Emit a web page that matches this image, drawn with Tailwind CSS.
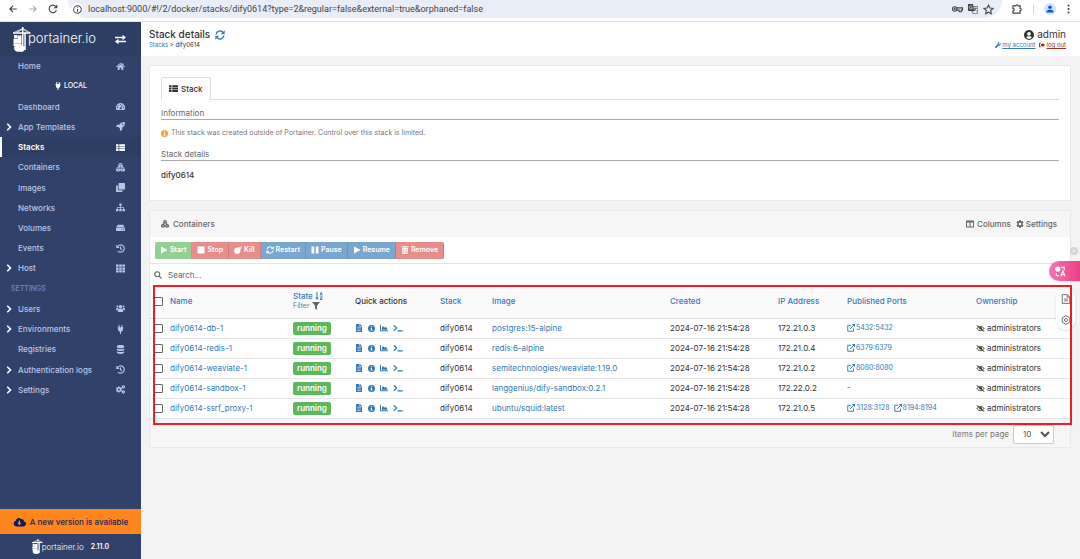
<!DOCTYPE html>
<html lang="en">
<head>
<meta charset="utf-8">
<title>Portainer - Stack details</title>
<script src="https://cdn.jsdelivr.net/npm/@tailwindcss/browser@4"></script>
</head>
<body class="flex h-screen flex-col overflow-hidden bg-[#f3f3f3] font-['Inter',sans-serif] text-[8px] leading-[10px] text-[#333]">

<svg class="hidden" aria-hidden="true">
  <symbol id="home" viewBox="0 0 16 16"><path d="M8 4.200l5 4.300V14H9.600v-3.600H6.400V14H3V8.500zM8 1.300l3.200 2.700V2.200h2v3.500L16 8l-1 1.200L8 3.300 1 9.200 0 8z"/></symbol>
  <symbol id="swap" viewBox="0 0 16 16"><path d="M0 4h11V1L16 5l-5 4V6.200H0zM16 9.800H5V7L0 11l5 4v-3h11z"/></symbol>
  <symbol id="plug" viewBox="0 0 16 16"><path d="M4.500 0h2v4h3V0h2v4H13v2h-.7v2A4.300 4.300 0 0 1 9 12.200V16H7v-3.800A4.300 4.300 0 0 1 3.700 8V6H3V4h1.500z"/></symbol>
  <symbol id="dash" viewBox="0 0 16 16"><path fill-rule="evenodd" d="M8 2a8 8 0 0 1 7 12H1A8 8 0 0 1 8 2zM8 3.500a1 1 0 1 0 0 2 1 1 0 0 0 0-2zM3.800 5.500a1 1 0 1 0 0 2 1 1 0 0 0 0-2zM2.500 9a1 1 0 1 0 0 2 1 1 0 0 0 0-2zM13.500 9a1 1 0 1 0 0 2 1 1 0 0 0 0-2zM11 5L8.300 9.600A1.700 1.700 0 1 0 9.500 10.300L12.200 5.600z"/></symbol>
  <symbol id="rocket" viewBox="0 0 16 16"><path fill-rule="evenodd" d="M15.700.3c.8 4.500-.8 7.200-4.700 9.900V14l-4 2v-4.300L4.300 9H0l2-4h3.800C8.500 1 11.500-.4 15.700.3zM12 2.700a1.300 1.300 0 1 0 0 2.600 1.300 1.300 0 0 0 0-2.600z"/></symbol>
  <symbol id="list" viewBox="0 0 16 16"><path d="M0 2h4.500v3.400H0zM5.800 2H16v3.400H5.800zM0 6.400h4.500v3.400H0zM5.800 6.400H16v3.400H5.800zM0 10.800h4.500v3.400H0zM5.800 10.800H16v3.400H5.800z"/></symbol>
  <symbol id="cubes" viewBox="0 0 16 16"><path d="M8 0l3.900 1.500-3.900 1.800-3.900-1.800zM4 2.300l3.700 1.700v4L4 6.500zM12 2.300L8.300 4v4L12 6.500zM4 7.200l3.800 1.600L4 10.400.2 8.800zM0 9.600l3.700 1.600v4.400L0 13.800zM7.800 9.600l-3.500 1.600v4.400l3.500-1.800zM12 7.200l3.800 1.600-3.800 1.600-3.800-1.600zM8.200 9.600l3.500 1.600v4.400l-3.500-1.800zM16 9.600l-3.700 1.600v4.400l3.700-1.800z"/></symbol>
  <symbol id="clone" viewBox="0 0 16 16"><path d="M5.500 0H15a1 1 0 0 1 1 1v9.500a1 1 0 0 1-1 1H5.500a1 1 0 0 1-1-1V1a1 1 0 0 1 1-1zM1 4.500h2.300v7.200c0 .6.400 1 1 1h7.200V15a1 1 0 0 1-1 1H1a1 1 0 0 1-1-1V5.500a1 1 0 0 1 1-1z"/></symbol>
  <symbol id="sitemap" viewBox="0 0 16 16"><path d="M5.800 1h4.400v4H8.700v2H14v3.500h2v4h-4.500v-4h1.200V8.300h-4v2.200h1.500v4H5.800v-4h1.500V8.300h-4v2.200h1.200v4H0v-4h2V7h5.300V5H5.800z"/></symbol>
  <symbol id="hdd" viewBox="0 0 16 16"><path fill-rule="evenodd" d="M3.500 3h9L16 8.200H0zM1 9h14a1 1 0 0 1 1 1v3a1 1 0 0 1-1 1H1a1 1 0 0 1-1-1v-3a1 1 0 0 1 1-1zM10 10.700v1.500h1.500v-1.500zM12.700 10.700v1.500h1.500v-1.500z"/></symbol>
  <symbol id="history" viewBox="0 0 16 16"><path fill="none" stroke="currentColor" stroke-width="2" d="M2.500 5A6.500 6.500 0 1 1 3.500 12.500M8 4.500V8.500l2.800 1.800"/><path d="M.5 1v6h6z"/></symbol>
  <symbol id="th" viewBox="0 0 16 16"><path d="M0 1h4.600v4H0zM5.700 1h4.600v4H5.700zM11.400 1H16v4h-4.600zM0 6h4.600v4H0zM5.700 6h4.600v4H5.700zM11.400 6H16v4h-4.600zM0 11h4.600v4H0zM5.700 11h4.600v4H5.700zM11.400 11H16v4h-4.600z"/></symbol>
  <symbol id="users" viewBox="0 0 16 16"><circle cx="2.700" cy="4.500" r="1.900"/><circle cx="13.300" cy="4.500" r="1.900"/><circle cx="8" cy="4.800" r="2.900"/><path d="M0 10C0 7.500 1 7 2.700 7c.8 0 1.500.3 2 .8C3.500 8.500 3 9.200 2.900 11H0zM16 10C16 7.500 15 7 13.300 7c-.8 0-1.500.3-2 .8 1.200.7 1.700 1.400 1.800 3.200H16zM3.500 14v-2.500c0-2 1.500-3.300 4.500-3.300s4.500 1.300 4.500 3.300V14z"/></symbol>
  <symbol id="db" viewBox="0 0 16 16"><path d="M1.500 2.500C1.500-.7 14.500-.7 14.500 2.500v1c0 3-13 3-13 0zM1.500 6c3 2 10 2 13 0v2.500c0 3-13 3-13 0zM1.500 11c3 2 10 2 13 0v2.500c0 3.200-13 3.200-13 0z"/></symbol>
  <symbol id="cog" viewBox="0 0 16 16"><path fill-rule="evenodd" d="M6.500 0h3l.4 2.100 1.500.8 2-.8 1.600 2.700L13.400 6.300v3.400l1.600 1.500-1.600 2.700-2-.8-1.500.8L9.500 16h-3l-.4-2.100-1.500-.8-2 .8L1 11.200l1.600-1.500V6.300L1 4.800l1.600-2.700 2 .8 1.500-.8zM8 5.300a2.700 2.700 0 1 0 0 5.400 2.700 2.700 0 0 0 0-5.400z"/></symbol>
  <symbol id="cogs" viewBox="0 0 16 16"><path fill-rule="evenodd" d="M4 2.500h2.400l.4 1.500 1.300.6 1.400-.6 1.200 2-1.100 1v2l1.100 1-1.200 2-1.400-.6-1.300.6-.4 1.500H4L3.600 12l-1.300-.6-1.300.6-1-2 1-1V7L0 6l1-2 1.300.6L3.600 4zM5.200 6.200a1.800 1.800 0 1 0 0 3.600 1.800 1.800 0 0 0 0-3.600zM12 .5h2l.3 1 1.700.8V5l-1.700.6-.3 1.200h-2l-.5-1.200L10.300 5V2.300l1.200-.8zM13 2.700a1 1 0 1 0 0 2 1 1 0 0 0 0-2zM12 9.200h2l.3 1 1.700.8v2.700l-1.700.6-.3 1.200h-2l-.5-1.200-1.200-.6V11l1.200-.8zM13 11.400a1 1 0 1 0 0 2 1 1 0 0 0 0-2z"/></symbol>
  <symbol id="sync" viewBox="0 0 16 16"><path fill="none" stroke="currentColor" stroke-width="2.200" d="M1.600 7A6.400 6.400 0 0 1 13 4.200M14.400 9A6.400 6.400 0 0 1 3 11.800"/><path d="M15.500.5v6.200H9.300zM.5 15.500V9.300h6.200z"/></symbol>
  <symbol id="cloud" viewBox="0 0 20 16"><path fill-rule="evenodd" d="M16.800 7A3 3 0 0 0 12.800 3.400 5 5 0 0 0 4 6a4.600 4.600 0 0 0 .6 9H16a4 4 0 0 0 .8-8zM8.700 5.500h2.200v3.700h2.500L9.800 13 6.200 9.200h2.500z"/></symbol>
  <symbol id="info" viewBox="0 0 16 16"><path fill-rule="evenodd" d="M8 0a8 8 0 1 0 0 16A8 8 0 0 0 8 0zM6.700 2.800h2.600v2.500H6.700zM6 6.600h3.300V11h1v1.700H5.800V11h.9V8.300H6z"/></symbol>
  <symbol id="play" viewBox="0 0 16 16"><path d="M2 1l13 7-13 7z"/></symbol>
  <symbol id="stop" viewBox="0 0 16 16"><rect x="1" y="1" width="14" height="14" rx="1"/></symbol>
  <symbol id="bomb" viewBox="0 0 16 16"><circle cx="6.500" cy="9.500" r="6.300"/><path d="M9 3l1.500-1.500 1.500 1.500 1.500-1.600 1 1L13 4l1.500 1.500L13 7zM14 0h1v1.500h-1zM15 2.500h1v1h-1z"/></symbol>
  <symbol id="pause" viewBox="0 0 16 16"><path d="M1 1h5.500v14H1zM9.500 1H15v14H9.500z"/></symbol>
  <symbol id="trash" viewBox="0 0 16 16"><path fill-rule="evenodd" d="M1 1h4.500l.7-1h3.600l.7 1H15v2H1zM2 4h12l-.7 12H2.700zM5 6v8h1V6zM7.500 6v8h1V6zM10 6v8h1V6z"/></symbol>
  <symbol id="search" viewBox="0 0 16 16"><path fill="none" stroke="currentColor" stroke-width="2.200" d="M6.500 1.500a5 5 0 1 1 0 10 5 5 0 0 1 0-10zM10.300 10.300L15 15"/></symbol>
  <symbol id="columns" viewBox="0 0 16 16"><path fill-rule="evenodd" d="M1 1h14a1 1 0 0 1 1 1v12a1 1 0 0 1-1 1H1a1 1 0 0 1-1-1V2a1 1 0 0 1 1-1zM2 5v8h5V5zM9 5v8h5V5z"/></symbol>
  <symbol id="sort" viewBox="0 0 16 16"><path d="M3 0h2v11h2.500L4 16 .5 11H3zM9.500 7L11.500 0h1.800l2 7h-1.600l-.4-1.500h-1.800L11.100 7zM12 4h1l-.5-2zM9.800 9H15v1.500L12 14.500h3V16H9.600v-1.500l3-4H9.800z"/></symbol>
  <symbol id="filter" viewBox="0 0 16 16"><path d="M0 0h16L10 7.500V16l-4-3V7.500z"/></symbol>
  <symbol id="file" viewBox="0 0 16 16"><path fill-rule="evenodd" d="M2 0h7v5h5v11H2zM10 0l4 4h-4zM4.500 7v1.200h7V7zM4.500 9.500v1.200h7V9.500zM4.500 12v1.200h7V12z"/></symbol>
  <symbol id="chart" viewBox="0 0 16 16"><path d="M0 2h2v10.500h14v2H0zM3.500 11.500V8L6 4l3 3.500 2.500-2.200 3 3.700v2.500z"/></symbol>
  <symbol id="term" viewBox="0 0 20 16"><path fill="none" stroke="currentColor" stroke-width="2.400" d="M1.500 2.500L7.500 8l-6 5.500M9 13.800h10.500"/></symbol>
  <symbol id="ext" viewBox="0 0 16 16"><path fill="none" stroke="currentColor" stroke-width="1.900" d="M8.500 2.500H1.500v12h11.500V9M6 10l7.500-7.500"/><path d="M9.500 0H16v6.500z"/></symbol>
  <symbol id="eyeoff" viewBox="0 0 20 16"><path fill="none" stroke="currentColor" stroke-width="2.200" d="M2 8c3.500-6.500 12.500-6.500 16 0-3.500 6.500-12.500 6.500-16 0zM1 .5l18 15"/><circle cx="10.500" cy="7.500" r="3"/></symbol>
  <symbol id="user" viewBox="0 0 16 16"><path fill-rule="evenodd" d="M8 0a8 8 0 1 0 0 16A8 8 0 0 0 8 0zM8 3a3 3 0 1 1 0 6 3 3 0 0 1 0-6zM3.500 12c.6-1.600 2-2 4.500-2s3.900.4 4.500 2A6 6 0 0 1 8 14.200 6 6 0 0 1 3.500 12z"/></symbol>
  <symbol id="wrench" viewBox="0 0 16 16"><path d="M15.600 3.500l-2.500 2.400-2.400-.6-.6-2.400L12.500.4C9 -.5 6.300 2 7 5.700L.7 12a2.300 2.300 0 0 0 3.300 3.300L10.300 9c3.700.7 6.200-2 5.300-5.500z"/></symbol>
  <symbol id="logout" viewBox="0 0 16 16"><path d="M6 2v2H2.500v8H6v2H2a2 2 0 0 1-2-2V4a2 2 0 0 1 2-2zM16 8l-6.500 6v-3.500H5v-5h4.500V2z"/></symbol>
  <symbol id="chev" viewBox="0 0 16 16"><path fill="none" stroke="currentColor" stroke-width="3.200" d="M4.500 1.500L11 8l-6.500 6.500"/></symbol>
  <symbol id="crane" viewBox="0 0 18 25"><path d="M0 5.200h17.500v1.600H0zM9 0h1.500v24H9zM11.300 6h1.500v17h-1.500z"/><path fill="none" stroke="currentColor" stroke-width=".8" d="M1 5.500L9.700 1.500l7 4M4 5.500L9 2.500M11 2.500l3 3"/><path d="M1 8h3.200v3.500H1zM4.500 8.500H8.500V16h-4zM.5 12h4v4h-4zM.5 16.300h8V19h-8z"/><path d="M1.200 21.500c-1-2 1.500-4 3.300-2.700 1.500-1.500 4.500-1.300 5.300.4 2.500-.2 3.500 2.600 1.700 3.800-.5 1.800-4 2.500-5.500 1.500-2.500.8-5-.8-4.800-3z"/></symbol>
</svg>

<!-- Browser toolbar -->
<div class="flex h-[22px] shrink-0 items-start border-b border-[#e4e4e4] bg-white font-['Roboto',sans-serif] text-[#444]">
  <div class="flex h-[18px] w-17 items-center gap-[10px] pl-[8px]">
    <button aria-label="Back"><svg class="size-[10px]" viewBox="0 0 16 16" fill="none" stroke="#444" stroke-width="1.800"><path d="M14 8H3M8 3L3 8l5 5"/></svg></button>
    <button aria-label="Forward"><svg class="size-[10px]" viewBox="0 0 16 16" fill="none" stroke="#aaa" stroke-width="1.800"><path d="M2 8h11M8 3l5 5-5 5"/></svg></button>
    <button aria-label="Reload"><svg class="size-[10px]" viewBox="0 0 16 16" fill="none" stroke="#444" stroke-width="1.800"><path d="M13.500 10A6 6 0 1 1 12.500 4L14 6M14 1.500V6H9.500"/></svg></button>
  </div>
  <div class="flex h-[18px] flex-1 items-center gap-[5px] rounded-b-full bg-[#e9edf7] pr-[8px] pl-[3px]">
    <span class="flex size-[12px] items-center justify-center rounded-full bg-white"><svg class="size-[9px]" viewBox="0 0 16 16" fill="none" stroke="#444" stroke-width="1.800"><circle cx="8" cy="8" r="6.800"/><path d="M8 7v5M8 4v1.500"/></svg></span>
    <input aria-label="Address" class="min-w-0 flex-1 bg-transparent text-[9px] leading-[14px] text-[#444]" value="localhost:9000/#!/2/docker/stacks/dify0614?type=2&amp;regular=false&amp;external=true&amp;orphaned=false">
    <button aria-label="Passwords"><svg class="h-[8px] w-[11px]" viewBox="0 0 20 14" fill="none" stroke="#444" stroke-width="2"><circle cx="5" cy="7" r="4"/><path d="M9 5h10v4h-2v3h-4V9H9"/><circle cx="5" cy="7" r="1"/></svg></button>
    <button aria-label="Translate"><svg class="size-[10px]" viewBox="0 0 16 16"><path fill="#444" d="M0 0h8l2 11H1a1 1 0 0 1-1-1z"/><path fill="#e9edf7" stroke="#444" d="M9 4h6.500v11.500H8L6 11h4z"/><path stroke="#fff" fill="none" d="M6.500 4A2.500 2.500 0 1 0 7 6H5"/><path stroke="#444" fill="none" d="M10 7h4.500M12 6v1c0 2-1 3-2 4M11 8l3 4"/></svg></button>
    <button aria-label="Bookmark"><svg class="size-[11px]" viewBox="0 0 16 16" fill="none" stroke="#444" stroke-width="1.500"><path d="M8 1.500l2 4.300 4.600.5-3.400 3.200.9 4.700L8 11.900l-4.100 2.300.9-4.700L1.400 6.300 6 5.800z"/></svg></button>
  </div>
  <div class="flex h-[18px] w-[78px] items-center justify-between pr-[10px] pl-[10px]">
    <button aria-label="Extensions"><svg class="size-[10px]" viewBox="0 0 16 16" fill="none" stroke="#444" stroke-width="1.800"><path d="M1.500 3H6a1.800 1.800 0 0 1 3.600 0h3.400v4a1.800 1.800 0 0 1 0 3.600V14.500H1.500V11a2 2 0 0 0 0-4z"/></svg></button>
    <span class="h-[9px] w-px bg-[#c5d5f5]"></span>
    <button aria-label="Profile" class="flex size-[12px] items-center justify-center rounded-full bg-[#d3e3fd]"><svg class="size-[8px]" viewBox="0 0 16 16" fill="#0b57d0"><circle cx="8" cy="4.500" r="3.500"/><path d="M1 15v-2c0-5 14-5 14 0v2z"/></svg></button>
    <button aria-label="Menu"><svg class="h-[10px] w-[3px]" viewBox="0 0 4 14" fill="#444"><circle cx="2" cy="2" r="1.400"/><circle cx="2" cy="7" r="1.400"/><circle cx="2" cy="12" r="1.400"/></svg></button>
  </div>
</div>

<div class="flex min-h-0 flex-1">
  <!-- Sidebar -->
  <aside class="flex w-[141px] shrink-0 flex-col bg-[#30426a] font-medium text-[#b8c6e6]">
    <div class="flex h-[34px] shrink-0 items-center bg-[#2d3e63] pr-[15px] pl-[13px] text-white">
      <svg class="h-[25px] w-[18px] fill-current"><use href="#crane"/></svg>
      <span class="-ml-[3px] flex-1 pb-[3px] text-[13px] leading-[16px] font-light">portainer.io</span>
      <button aria-label="Toggle sidebar"><svg class="size-[11px] fill-current"><use href="#swap"/></svg></button>
    </div>
    <nav id="nav" class="grid h-[344px] shrink-0 auto-rows-fr"></nav>
    <a href="#" class="mt-auto flex h-[25px] items-center justify-center gap-[4px] bg-[#ff861d] text-[8px] text-[#1b2556]">
      <svg class="h-[10px] w-[13px] fill-[#0c1e5c]"><use href="#cloud"/></svg>A new version is available
    </a>
    <div class="flex h-[25px] items-center justify-center text-white">
      <svg class="h-[15px] w-[11px] fill-current"><use href="#crane"/></svg>
      <span class="-ml-px text-[8px] font-light">portainer.io</span>
      <span class="ml-[7px] text-[7px] font-semibold">2.11.0</span>
    </div>
  </aside>

  <div class="flex min-w-0 flex-1 flex-col">
    <header class="flex h-[34px] shrink-0 justify-between bg-white pt-[6px] pr-[14px] pl-[8px]">
      <div>
        <h1 class="flex items-center gap-[5px] text-[10px] leading-[13px] font-medium">Stack details
          <button aria-label="Refresh" class="text-[#337ab7]"><svg class="size-[10px] fill-current"><use href="#sync"/></svg></button></h1>
        <p class="text-[6px] leading-[8px]"><a href="#" class="text-[#337ab7]">Stacks</a> &gt; dify0614</p>
      </div>
      <div class="text-right">
        <p class="flex items-center justify-end gap-[3px] text-[10px] leading-[13px]"><svg class="size-[10px] fill-current"><use href="#user"/></svg>admin</p>
        <p class="flex gap-[4px] text-[6px] leading-[8px]">
          <a href="#" class="flex items-center gap-px text-[#337ab7] underline"><svg class="size-[6px] fill-current"><use href="#wrench"/></svg>my account</a>
          <a href="#" class="flex items-center gap-px text-[#a02c2c] underline"><svg class="size-[6px] fill-current"><use href="#logout"/></svg>log out</a>
        </p>
      </div>
    </header>

    <main class="flex flex-col gap-[9px] pt-[9px] pr-[9px] pl-[8px]">
      <section class="border border-[#e9e9e9] bg-white px-[11px] pt-[11px] pb-[20px]">
        <div class="flex border-b border-[#ddd]">
          <button class="-mb-px flex h-[23px] items-center gap-[3px] rounded-t-[2px] border border-b-0 border-[#ddd] bg-white px-[7px] pb-px font-medium"><svg class="size-[9px] fill-current"><use href="#list"/></svg>Stack</button>
        </div>
        <h2 class="mt-[8px] border-b border-[#aaa] pb-px text-[#666]">Information</h2>
        <p class="mt-[8px] flex items-center gap-[3px] text-[7px] text-[#777]"><svg class="size-[7px] fill-[#f0a23a]"><use href="#info"/></svg>This stack was created outside of Portainer. Control over this stack is limited.</p>
        <h2 class="mt-[11px] border-b border-[#aaa] pb-px text-[#666]">Stack details</h2>
        <p class="mt-[9px] font-medium">dify0614</p>
      </section>

      <section class="relative border border-[#e9e9e9] bg-white">
        <div class="flex h-[26px] items-center gap-[5px] bg-[#f6f6f6] pr-[13px] pl-[11px] text-[#666]">
          <h2 class="flex flex-1 items-center gap-[4px] font-medium"><svg class="size-[8px] fill-current"><use href="#cubes"/></svg>Containers</h2>
          <button class="flex items-center gap-[3px] font-medium"><svg class="size-[8px] fill-current"><use href="#columns"/></svg>Columns</button>
          <button class="flex items-center gap-[2px] font-medium"><svg class="size-[8px] fill-current"><use href="#cog"/></svg>Settings</button>
        </div>
        <div id="actions" class="flex h-[27px] items-center border-b border-[#e5e5e5] pl-[5px] text-[7px] font-semibold text-white"></div>
        <label class="flex h-[21px] items-center gap-[6px] pl-[4px] text-[#666]"><svg class="size-[8px] fill-none"><use href="#search"/></svg><input aria-label="Search" placeholder="Search..." class="flex-1 bg-transparent placeholder:text-[#666]"></label>
        <table class="w-full table-fixed border-collapse text-left">
          <colgroup><col class="w-[20px]"><col class="w-[123px]"><col class="w-[62px]"><col class="w-[85px]"><col class="w-[52px]"><col><col class="w-[108px]"><col class="w-[69px]"><col class="w-[129px]"><col class="w-[94px]"></colgroup>
          <thead>
            <tr class="h-[33px] border-b border-[#ddd] bg-[#fafafa] text-[#337ab7] [&_th]:p-0 [&_th]:font-medium">
              <th><input type="checkbox" aria-label="Select all" class="ml-[4px] block size-[9px] appearance-none rounded-[1px] border border-[#666] bg-white"></th>
              <th><a href="#">Name</a></th>
              <th><a href="#" class="flex items-center gap-[2px]">State <svg class="size-[8px] fill-current"><use href="#sort"/></svg></a><button class="flex items-center gap-[2px] text-[7px] font-normal text-[#777]">Filter <svg class="size-[8px] fill-[#666]"><use href="#filter"/></svg></button></th>
              <th class="text-[#333]">Quick actions</th>
              <th><a href="#">Stack</a></th><th><a href="#">Image</a></th><th><a href="#">Created</a></th><th><a href="#">IP Address</a></th><th><a href="#">Published Ports</a></th><th><a href="#">Ownership</a></th>
            </tr>
          </thead>
          <tbody id="rows"></tbody>
        </table>
        <div class="flex h-[28px] items-center justify-end gap-[4px] bg-[#f6f6f6] pt-[3px] pr-[16px] text-[#777]">
          <label for="pp">Items per page</label>
          <select id="pp" class="h-[19px] w-[41px] rounded-[2px] border border-[#ccc] bg-white pl-[5px] text-[#555]"><option>10</option></select>
        </div>
        <!-- Highlight frame round the table -->
        <div class="pointer-events-none absolute top-[74px] -right-[2px] bottom-[22px] left-[3px] z-20 border-2 border-[#ee1c25]"></div>
      </section>
    </main>
  </div>
</div>

<!-- Floating translator widget -->
<button aria-label="Close widget" class="fixed top-[247px] right-[2px] z-10 flex size-[8px] items-center justify-center rounded-full bg-[#d4d4d4]"><svg class="size-[4px]" viewBox="0 0 8 8" stroke="#fff" stroke-width="1.500"><path d="M1 1l6 6M7 1L1 7"/></svg></button>
<button aria-label="Translate page" class="fixed top-[261px] right-0 z-30 flex h-[20px] w-[31px] items-center rounded-l-full bg-linear-to-r from-[#f574b4] to-[#ea3f86] pl-[6px] shadow"><svg class="size-[11px]" viewBox="0 0 16 16" fill="none" stroke="#fff" stroke-width="1.600"><circle cx="4" cy="4.500" r="3" fill="#fff"/><path d="M9 2h4.500v4M2 10v4h4M8.500 15l3-8 3 8M9.500 12.500h4"/></svg></button>
<div class="fixed top-[288px] right-[5px] z-10 flex h-[42px] w-[19px] flex-col items-center justify-around rounded-full bg-white shadow">
  <button aria-label="Notes"><svg class="size-[10px]" viewBox="0 0 16 16" fill="none" stroke="#666" stroke-width="1.500"><path d="M2 1h8l4 4v10H2zM10 1v4h4M5 8h6M5 11h6"/></svg></button>
  <button aria-label="Widget settings"><svg class="size-[10px]" viewBox="0 0 16 16" fill="none" stroke="#666" stroke-width="1.500"><path d="M8 1l6 3.500v7L8 15l-6-3.500v-7z"/><circle cx="8" cy="8" r="2.500"/></svg></button>
</div>

<script>
const icon = (id, cls) => `<svg class="${cls}"><use href="#${id}"/></svg>`;

const nav = [['Home','home'],['LOCAL','','local'],['Dashboard','dash'],['App Templates','rocket','open'],['Stacks','list','active'],['Containers','cubes'],['Images','clone'],['Networks','sitemap'],['Volumes','hdd'],['Events','history'],['Host','th','open'],['SETTINGS','','title'],['Users','users','open'],['Environments','plug','open'],['Registries','db'],['Authentication logs','history','open'],['Settings','cogs','open']];
document.getElementById('nav').innerHTML = nav.map(([t, i, k]) => {
  if (k === 'local') return `<div class="flex items-center justify-center gap-[2px] text-[7px] text-white">${icon('plug', 'size-[8px] fill-current')}LOCAL</div>`;
  if (k === 'title') return `<div class="flex items-center pl-[11px] text-[7px] text-[#7189c2]">SETTINGS</div>`;
  const chev = k === 'open' ? icon('chev', 'mx-[5px] size-[8px] text-white') : '<span class="w-[18px]"></span>';
  return `<a href="#" class="${k === 'active' ? 'flex items-center border-l-2 border-white bg-[#2d3e63] pr-[16px] font-semibold text-white [&>span:first-child]:w-[16px]' : 'flex items-center pr-[16px]'}">${chev}<span class="flex-1">${t}</span>${icon(i, 'size-[9px] fill-current')}</a>`;
}).join('');

const actions = [['Start','play','bg-[#93d093]'],['Stop','stop','bg-[#e78d8b]'],['Kill','bomb','bg-[#e78d8b]'],['Restart','sync','bg-[#7aa7d0]'],['Pause','pause','bg-[#7aa7d0]'],['Resume','play','bg-[#7aa7d0]'],['Remove','trash','bg-[#e78d8b]']];
document.getElementById('actions').innerHTML = actions.map(([t, i, c]) =>
  `<button class="flex h-[17px] items-center gap-[2px] border-r border-black/10 px-[5px] first:rounded-l-[2px] last:rounded-r-[2px] ${c}">${icon(i, 'size-[8px] fill-current')}${t}</button>`).join('');

const rows = [
  ['dify0614-db-1','postgres:15-alpine','172.21.0.3',['5432:5432']],
  ['dify0614-redis-1','redis:6-alpine','172.21.0.4',['6379:6379']],
  ['dify0614-weaviate-1','semitechnologies/weaviate:1.19.0','172.21.0.2',['8080:8080']],
  ['dify0614-sandbox-1','langgenius/dify-sandbox:0.2.1','172.22.0.2',[]],
  ['dify0614-ssrf_proxy-1','ubuntu/squid:latest','172.21.0.5',['3128:3128','8194:8194']]];
document.getElementById('rows').innerHTML = rows.map(([n, img, ip, ports]) => `
<tr class="h-[20px] border-b border-[#e5e5e5] whitespace-nowrap [&>td]:p-0">
<td><input type="checkbox" aria-label="Select ${n}" class="ml-[4px] block size-[9px] appearance-none rounded-[1px] border border-[#666] bg-white"></td>
<td><a href="#" class="text-[#337ab7]">${n}</a></td>
<td><span class="inline-block h-[13px] rounded-[2px] bg-[#5cb85c] px-[4px] leading-[13px] font-semibold text-white">running</span></td>
<td><div class="flex items-center gap-[5px] text-[#337ab7]"><a href="#" aria-label="Logs">${icon('file', 'size-[8px] fill-current')}</a><a href="#" aria-label="Inspect">${icon('info', 'size-[7px] fill-current')}</a><a href="#" aria-label="Stats">${icon('chart', 'size-[8px] fill-current')}</a><a href="#" aria-label="Console">${icon('term', 'h-[8px] w-[10px]')}</a></div></td>
<td>dify0614</td>
<td><a href="#" class="text-[#337ab7]">${img}</a></td>
<td>2024-07-16 21:54:28</td>
<td>${ip}</td>
<td><div class="flex gap-[4px] text-[7px] text-[#337ab7]">${ports.length ? ports.map(p => `<a href="#" class="flex items-center gap-px">${icon('ext', 'size-[8px] fill-current')}${p}</a>`).join('') : '<span class="text-[#333]">-</span>'}</div></td>
<td><div class="flex items-center gap-[2px]">${icon('eyeoff', 'h-[7px] w-[9px] fill-current')}administrators</div></td>
</tr>`).join('');
</script>
</body>
</html>
